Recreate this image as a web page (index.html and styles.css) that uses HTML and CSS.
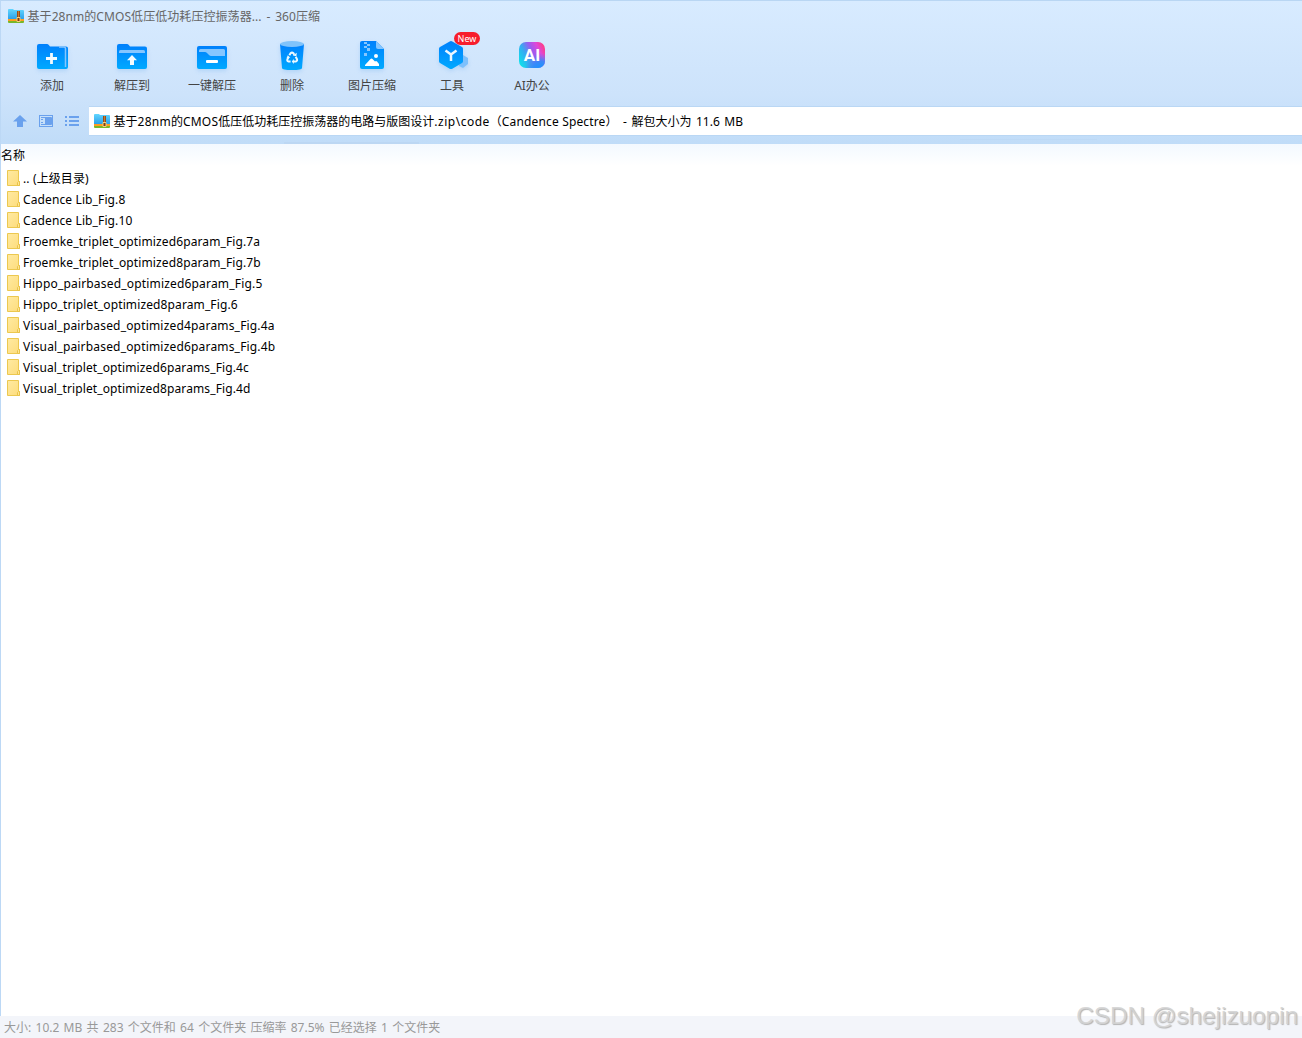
FILE: index.html
```html
<!DOCTYPE html>
<html lang="zh-CN">
<head>
<meta charset="utf-8">
<title>360压缩</title>
<link rel="stylesheet" href="styles.css">
</head>
<body>
<svg class="defs" aria-hidden="true">
  <defs>
    <linearGradient id="blue" x1="0" y1="0" x2="0" y2="1"><stop offset="0" stop-color="#0080fc"/><stop offset="1" stop-color="#00a9ff"/></linearGradient>
    <linearGradient id="aqua" x1="0" y1="0" x2="0" y2="1"><stop offset="0" stop-color="#62d6ff"/><stop offset="1" stop-color="#259be8"/></linearGradient>
    <linearGradient id="gold" x1="0" y1="0" x2="1" y2="1"><stop offset="0" stop-color="#ffeaa2"/><stop offset="1" stop-color="#fddc7b"/></linearGradient>
    <linearGradient id="ai" x1="0" y1="0.7" x2="1" y2="0.2"><stop offset="0" stop-color="#12dcea"/><stop offset=".3" stop-color="#38a8f2"/><stop offset=".55" stop-color="#9a5cf0"/><stop offset=".78" stop-color="#e048d8"/><stop offset="1" stop-color="#ff3c80"/></linearGradient>
    <radialGradient id="aiblue" cx=".85" cy="1.05" r=".62"><stop offset="0" stop-color="#1298ff"/><stop offset=".5" stop-color="#2f8cfa" stop-opacity=".9"/><stop offset="1" stop-color="#6078f0" stop-opacity="0"/></radialGradient>
    <symbol id="zip" viewBox="0 0 16 14">
      <path d="M0 1q0-1 1-1h4l1 1H15q1 0 1 1V11H0z" fill="url(#aqua)"/>
      <path d="M0 10h16v2H0z" fill="#ff9c20"/><path d="M0 12h16v1q0 1-1 1H1q-1 0-1-1z" fill="#78b72a"/>
      <path d="M9 2h3v11H9z" fill="#9a4c17"/>
      <path d="M10 2h1v6h-1z" fill="#c07d35"/>
      <path d="M9 8.500h3v4H9z" fill="#7d3c14" stroke="#f7cf79" stroke-width="1"/>
    </symbol>
    <symbol id="folder" viewBox="0 0 14 16">
      <path d="M.5.5h11v11h1v4H.5z" fill="url(#gold)" stroke="#ecc84f"/>
      <path d="M10.500 15.500v-3l1-1h1v4z" fill="#ffe694" stroke="#e9c34a"/>
    </symbol>
  </defs>
</svg>
<main class="window">
  <header class="chrome">
    <div class="titlebar"><svg class="zip-icon"><use href="#zip"/></svg><span class="title-text">基于28nm的CMOS低压低功耗压控振荡器... - 360压缩</span></div>
    <nav class="toolbar">
      <div class="tool"><svg class="tool-icon" viewBox="0 0 44 36">
        <path d="M9 8h8q1 0 1.800 1.100L20 10.500h16q2 0 2 2V31q0 2-2 2H9q-2 0-2-2V10q0-2 2-2z" fill="url(#blue)"/>
        <path d="M29 11h5q1.500 0 1.500 1.500V31" fill="none" stroke="#85c6ff" stroke-width="1.500"/>
        <path d="M21.500 17v11M16 22.500h11" stroke="#f2fbff" stroke-width="2.800"/></svg><span>添加</span></div>
      <div class="tool"><svg class="tool-icon" viewBox="0 0 44 36">
        <path d="M9 8h8q1 0 1.800 1.100L20 10.500h15q2 0 2 2V31q0 2-2 2H9q-2 0-2-2V10q0-2 2-2z" fill="url(#blue)"/>
        <path d="M9 17v-1.500Q9 14 10.500 14h23q1.500 0 1.500 1.500V17z" fill="#85c6ff"/>
        <path d="M22 19l5 5.300h-3V29h-4v-4.700h-3z" fill="#f4fcff"/></svg><span>解压到</span></div>
      <div class="tool"><svg class="tool-icon" viewBox="0 0 44 36">
        <rect x="7" y="10" width="30" height="23" rx="2" fill="url(#blue)"/>
        <path d="M9 16v-1.500q0-1.500 1.500-1.500h23q1.500 0 1.500 1.500V20H21q-1 0-2-1l-2-2q-1-1-2-1z" fill="#85c6ff"/>
        <rect x="16" y="24" width="12" height="3" rx="1" fill="#fff"/></svg><span>一键解压</span></div>
      <div class="tool"><svg class="tool-icon" viewBox="0 0 44 36">
        <path d="M10 8l2 24q0 2 10 2t10-2l2-24z" fill="url(#blue)"/><ellipse cx="22" cy="8" rx="12" ry="3" fill="#80c3fb"/>
        <g fill="none" stroke="#edfaff" stroke-width="2"><path d="M19.400 19.300l1.100-2q1.500-1.300 3 0l.8 1.500"/><path d="M25.700 20.800l1.300 2.400q.6 1.700-1.200 2.300H23"/><path d="M20.600 25.500h-2q-1.800-.5-1.200-2.200l1-1.800"/></g>
        <path d="M22.800 19.500l3.600.700.4-3.400zM23.800 23l-2 2.600 2 2.500zM16.500 22.200l1.300-2.900 2.500 2.500z" fill="#edfaff"/></svg><span>删除</span></div>
      <div class="tool"><svg class="tool-icon" viewBox="0 0 44 36">
        <path d="M12 5h14l8 8v18q0 2-2 2H12q-2 0-2-2V7q0-2 2-2z" fill="url(#blue)"/><path d="M26 5l8 8h-6q-2 0-2-2z" fill="#85c6ff"/>
        <path d="M14 6h3v2h3v2h-3v2h3v3h-3v-3h-3V10h3V8h-3zM14 17h3v3h-3z" fill="#85c6ff"/>
        <circle cx="26" cy="20" r="2" fill="#fff"/><path d="M15 30v-1l5.500-6q1-1 2 0l2.500 2.500q1-1 2 0l2 2.500v2z" fill="#fff"/></svg><span>图片压缩</span></div>
      <div class="tool"><svg class="tool-icon" viewBox="0 0 44 36">
        <path d="M31 19h2l5 3v6l-5 4-4-2z" fill="#7dc0fc"/><path d="M21 5q.7 0 1.300.400L32 11q1 .600 1 1.800v12.400q0 1.200-1 1.800l-9.700 5.700q-1.300.700-2.600 0L10 27q-1-.600-1-1.800V12.800Q9 11.600 10 11l9.700-5.600Q20.300 5 21 5z" fill="url(#blue)"/>
        <path d="M15.500 14.500l5.500 4 5.500-4M21 18v7" fill="none" stroke="#e9f7ff" stroke-width="2.500"/></svg><b class="badge">New</b><span>工具</span></div>
      <div class="tool"><svg class="tool-icon ai-icon" viewBox="0 0 44 36">
        <rect x="9" y="6" width="26" height="26" rx="7" fill="url(#ai)"/><rect x="9" y="6" width="26" height="26" rx="7" fill="url(#aiblue)"/>
        <text x="22" y="25" text-anchor="middle" class="ai-letters">AI</text></svg><span>AI办公</span></div>
    </nav>
    <div class="address-row">
      <svg class="nav-icons" viewBox="0 0 88 28">
        <g fill="#6aa1ed"><path d="M20 8l7 6.500h-4V20h-6v-5.500h-4z"/><path d="M45 11h6v6h-6z"/><path d="M65 9h2v2h-2zm4 0h10v2H69zm-4 4h2v2h-2zm4 0h10v2H69zm-4 4h2v2h-2zm4 0h10v2H69z"/></g>
        <rect x="39.500" y="8.500" width="13" height="11" fill="none" stroke="#6aa1ed"/><path d="M41 10.500h10.500v7H41" fill="none" stroke="#6aa1ed"/><path d="M41 12.500h2M41 15.500h2" stroke="#6aa1ed"/>
      </svg>
      <div class="address"><svg class="zip-icon"><use href="#zip"/></svg><span class="address-text">基于<span class="latin">28nm</span>的<span class="latin">CMOS</span>低压低功耗压控振荡器的电路与版图设计<span class="path">.zip\code</span>（<span class="tool-name">Candence Spectre</span>）<span class="size"> - 解包大小为 11.6 MB</span></span></div>
    </div>
  </header>
  <section class="files">
    <div class="column-head">名称</div>
    <ul class="file-list">
      <li><svg><use href="#folder"/></svg><span>.. (上级目录)</span></li>
      <li><svg><use href="#folder"/></svg><span>Cadence Lib_Fig.8</span></li>
      <li><svg><use href="#folder"/></svg><span>Cadence Lib_Fig.10</span></li>
      <li><svg><use href="#folder"/></svg><span>Froemke_triplet_optimized6param_Fig.7a</span></li>
      <li><svg><use href="#folder"/></svg><span>Froemke_triplet_optimized8param_Fig.7b</span></li>
      <li class="pair"><svg><use href="#folder"/></svg><span>Hippo_pairbased_optimized6param_Fig.5</span></li>
      <li><svg><use href="#folder"/></svg><span>Hippo_triplet_optimized8param_Fig.6</span></li>
      <li class="pair"><svg><use href="#folder"/></svg><span>Visual_pairbased_optimized4params_Fig.4a</span></li>
      <li class="pair"><svg><use href="#folder"/></svg><span>Visual_pairbased_optimized6params_Fig.4b</span></li>
      <li><svg><use href="#folder"/></svg><span>Visual_triplet_optimized6params_Fig.4c</span></li>
      <li><svg><use href="#folder"/></svg><span>Visual_triplet_optimized8params_Fig.4d</span></li>
    </ul>
  </section>
  <footer class="status">大小: 10.2 MB 共 283 个文件和 64 个文件夹 压缩率 87.5% 已经选择 1 个文件夹</footer>
  <div class="watermark">CSDN @shejizuopin</div>
</main>
</body>
</html>
```
FILE: styles.css
```css
* { box-sizing: border-box; }
body { margin: 0; font: 12px/18px "Noto Sans", "Noto Sans CJK SC", sans-serif; color: #000; }
.defs { position: absolute; width: 0; height: 0; }
.window { position: relative; width: 1302px; height: 1038px; display: flex; flex-direction: column; overflow: hidden; background: #fff; white-space: nowrap; }
.chrome { height: 144px; flex: none; border-top: 1px solid #b9d6f3; border-left: 1px solid #bcd8f5; background: linear-gradient(#bcd7f3, #bcd7f3) 283px 141px / 135px 2px no-repeat, linear-gradient(#bdd9f5, #bdd9f5) 959px 138px / 137px 1px no-repeat, linear-gradient(#d8ebff, #cde3fb 65%, #c0dcf8); }
.titlebar { height: 31px; display: flex; align-items: center; padding-left: 7px; color: #666; }
.title-text { letter-spacing: .07px; word-spacing: 1.6px; }
.zip-icon { width: 16px; height: 14px; flex: none; margin-right: 3.500px; }
.titlebar .zip-icon { margin-bottom: 1px; }
.toolbar { height: 74px; display: flex; padding: 4px 0 0 11px; }
.tool { position: relative; width: 80px; display: flex; flex-direction: column; align-items: center; color: #444; }
.tool-icon { width: 44px; height: 36px; margin-bottom: 5px; flex: none; filter: drop-shadow(0 2px 2px rgba(60,145,230,.2)); }
.ai-icon { filter: none; }
.ai-letters { font: bold 17px Roboto, sans-serif; fill: #fff; }
.badge { position: absolute; left: 42px; top: -4px; width: 26px; height: 13px; border-radius: 7px; background: #f71d2c; color: #fff; font-weight: 400; font-size: 9px; line-height: 13px; text-align: center; }
.address-row { height: 30px; display: flex; }
.nav-icons { width: 88px; height: 28px; flex: none; margin: 1px 0 0 -1px; }
.address { flex: 1; height: 30px; margin-left: 1px; display: flex; align-items: center; padding-left: 5px; background: #fff; border: 1px solid #bad7f4; border-width: 1px 0; }
.address-text { line-height: 18px; padding-top: 2px; }
.latin { letter-spacing: .25px; }
.path { letter-spacing: .5px; }
.tool-name { letter-spacing: .15px; }
.size { word-spacing: 1.400px; margin-left: 1px; }
.files { flex: 1; border-left: 1px solid #bcd8f5; background: linear-gradient(#f3f9ff, #fff 22px); }
.column-head { height: 23px; line-height: 24px; }
.file-list { list-style: none; margin: 0; padding: 0 0 0 6px; }
.file-list li { height: 21px; display: flex; align-items: center; letter-spacing: .12px; }
.file-list li.pair { letter-spacing: .18px; }
.file-list span { padding-top: 2px; }
.file-list svg { width: 14px; height: 16px; margin-right: 2px; flex: none; }
.status { height: 22px; flex: none; padding: 0 4px; line-height: 23px; word-spacing: 1.180px; color: #999; background: #f3f5fa; }
.watermark { position: absolute; right: 4px; bottom: 5px; font: 24.300px/34px "Liberation Sans", sans-serif; color: rgba(212,212,212,.9); text-shadow: 1px 1px 1px #b4b4b4; }
```
